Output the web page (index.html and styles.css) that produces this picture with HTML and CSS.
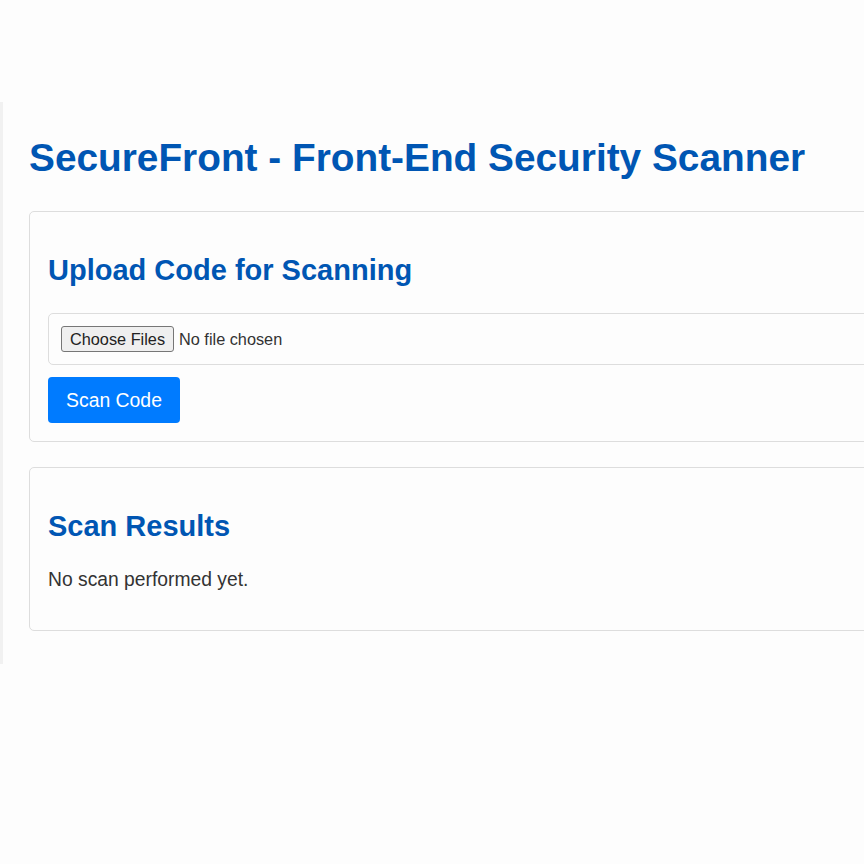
FILE: index.html
```html
<!DOCTYPE html>
<html lang="en">
<head>
<meta charset="utf-8">
<title>SecureFront - Front-End Security Scanner</title>
<link rel="stylesheet" href="styles.css">
</head>
<body>
<div class="page">
  <main class="container">
    <h1 class="title">SecureFront - Front-End Security Scanner</h1>
    <section class="card">
      <h2 class="card-title">Upload Code for Scanning</h2>
      <input class="file-input" type="file" multiple>
      <button class="scan-btn" type="button">Scan Code</button>
    </section>
    <section class="card">
      <h2 class="card-title">Scan Results</h2>
      <p class="results-text">No scan performed yet.</p>
    </section>
  </main>
</div>
</body>
</html>
```
FILE: styles.css
```css
html, body {
  margin: 0;
  padding: 0;
  background: #fdfdfd;
  overflow: hidden;
}

body {
  font-family: "Liberation Sans", Arial, sans-serif;
  color: #333;
  width: 864px;
  height: 864px;
}

.page {
  padding-top: 102px;
  overflow: hidden;
}

.container {
  width: 1000px;
  background: #fdfdfd;
  border-left: 3px solid #f1f1f1;
  padding: 34px 25px 33px 26px;
  box-sizing: border-box;
}

.title {
  margin: 0 0 31px;
  font-size: 38.8px;
  line-height: 44px;
  font-weight: bold;
  color: #0056b3;
}

.card {
  border: 1px solid #ddd;
  border-radius: 5px;
  padding: 18px;
  background: #fdfdfd;
  margin-bottom: 25px;
}

.card:last-child {
  margin-bottom: 0;
}

.card-title {
  margin: 24px 0 26px;
  font-size: 29px;
  line-height: 33px;
  font-weight: bold;
  color: #0056b3;
}

.file-input {
  display: block;
  width: 100%;
  box-sizing: border-box;
  border: 1px solid #ddd;
  border-radius: 5px;
  padding: 12px;
  font-family: "Liberation Sans", Arial, sans-serif;
  font-size: 16.3px;
  color: #333;
  background: #fdfdfd;
  margin-bottom: 12px;
}

.file-input::file-selector-button {
  font-family: "Liberation Sans", Arial, sans-serif;
  font-size: 16.3px;
  height: 26px;
  padding: 0 8px;
  margin-right: 5px;
  border: 1px solid #767676;
  border-radius: 3px;
  background: #efefef;
  color: #222;
}

.scan-btn {
  display: block;
  background: #007bff;
  color: #fff;
  border: none;
  border-radius: 4px;
  font-family: "Liberation Sans", Arial, sans-serif;
  font-size: 19.4px;
  height: 46px;
  padding: 0 18px;
}

.results-text {
  margin: 25px 0 21px;
  font-size: 19.3px;
  line-height: 22px;
}
```
